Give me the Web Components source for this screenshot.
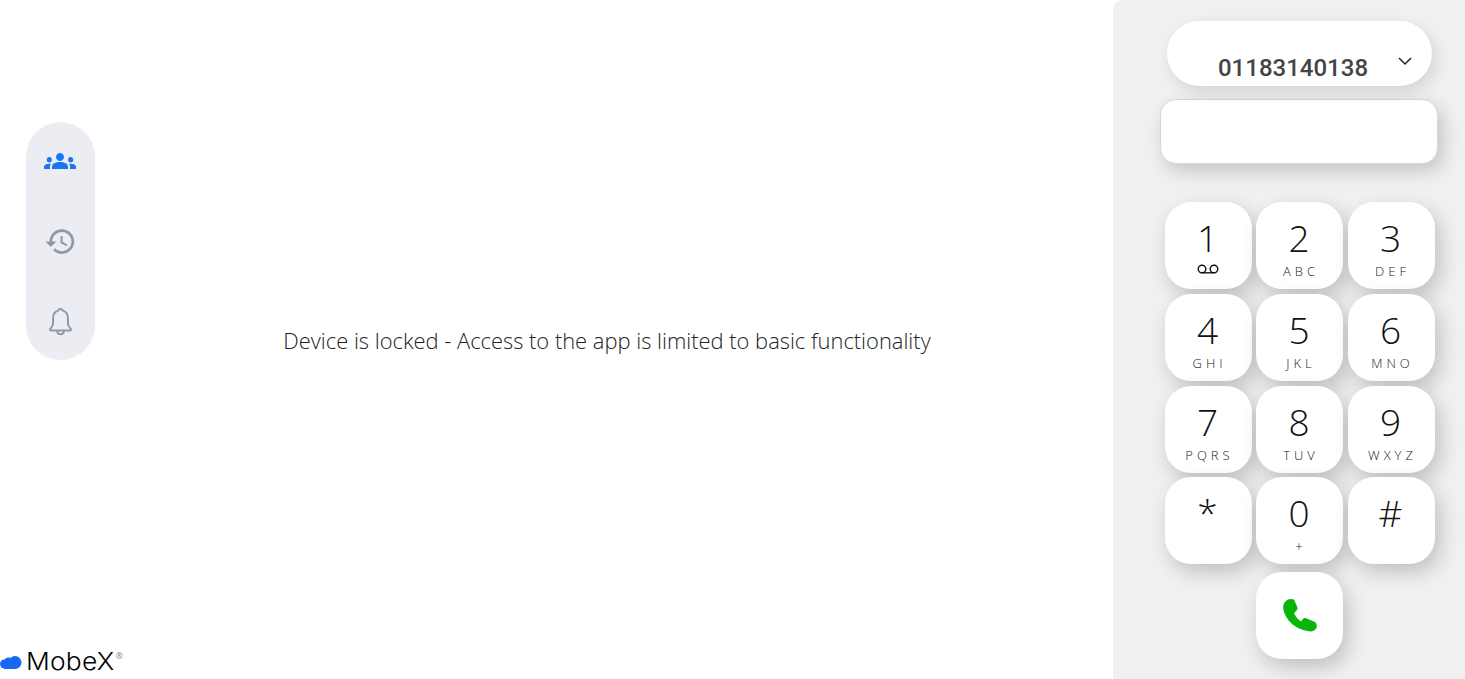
<!DOCTYPE html>
<html>
<head>
<meta charset="utf-8">
<title>MobeX</title>
<style>
html, body { margin: 0; height: 100%; background: #fff; overflow: hidden; }
body { font-family: "Open Sans", sans-serif; }
</style>
</head>
<body>
<app-shell>
  <nav-rail slot="rail"></nav-rail>
  <locked-message slot="message">Device is locked - Access to the app is limited to basic functionality</locked-message>
  <brand-logo slot="logo"></brand-logo>
  <dial-panel slot="panel" number="01183140138"></dial-panel>
</app-shell>

<script>
class AppShell extends HTMLElement {
  constructor() {
    super();
    this.attachShadow({mode: 'open'}).innerHTML = `
<style>
:host { display: grid; grid-template-columns: 101px 1012px 352px; grid-template-rows: 1fr auto; height: 679px; }
.rail { grid-column: 1; grid-row: 1; padding: 122px 0 0 26px; }
.message { grid-column: 2; grid-row: 1 / 3; display: flex; align-items: center; justify-content: center; padding-top: 2px; }
.logo { grid-column: 1 / 3; grid-row: 2; padding-bottom: 5px; }
.panel { grid-column: 3; grid-row: 1 / 3; }
</style>
<div class="rail"><slot name="rail"></slot></div>
<div class="message"><slot name="message"></slot></div>
<div class="logo"><slot name="logo"></slot></div>
<div class="panel"><slot name="panel"></slot></div>`;
  }
}

class NavRail extends HTMLElement {
  constructor() {
    super();
    this.attachShadow({mode: 'open'}).innerHTML = `
<style>
:host { display: flex; flex-direction: column; align-items: center; width: 69px; height: 238px; box-sizing: border-box;
  padding-top: 19px; gap: 40px; background: #ebedf2; border-radius: 35px; }
.slot { display: flex; align-items: center; justify-content: center; width: 40px; height: 40px; }
.first { margin-right: 1px; }
svg { display: block; }
</style>
<div class="slot first"><svg width="32" height="32" viewBox="0 0 24 24" fill="#1877f2"><path d="M12 12.750c1.630 0 3.070.39 4.240.9 1.080.48 1.760 1.560 1.760 2.730V18H6v-1.610c0-1.180.68-2.260 1.760-2.730 1.170-.52 2.610-.91 4.240-.91zM4 13c1.100 0 2-.9 2-2s-.9-2-2-2-2 .9-2 2 .9 2 2 2zm1.130 1.100C4.760 14.040 4.390 14 4 14c-.99 0-1.930.21-2.780.58C.48 14.900 0 15.620 0 16.430V18h4.500v-1.610c0-.83.23-1.610.63-2.290zM20 13c1.100 0 2-.9 2-2s-.9-2-2-2-2 .9-2 2 .9 2 2 2zm4 3.430c0-.81-.48-1.530-1.220-1.850-.85-.37-1.790-.58-2.780-.58-.39 0-.76.04-1.130.1.4.68.63 1.460.63 2.290V18H24v-1.570zM12 6c1.660 0 3 1.340 3 3s-1.340 3-3 3-3-1.340-3-3 1.340-3 3-3z"/></svg></div>
<div class="slot"><svg width="33" height="33" viewBox="0 0 24 24" fill="#8f98a8"><path d="M13 3c-4.970 0-9 4.030-9 9H1l3.890 3.890.07.14L9 12H6c0-3.870 3.130-7 7-7s7 3.130 7 7-3.130 7-7 7c-1.930 0-3.680-.79-4.940-2.060l-1.420 1.420C8.270 19.990 10.510 21 13 21c4.970 0 9-4.030 9-9s-4.030-9-9-9zm-1 5v5l4.280 2.540.72-1.210-3.500-2.080V8H12z"/></svg></div>
<div class="slot"><svg width="35" height="35" viewBox="0 0 24 24" fill="none" stroke="#8f98a8" stroke-width="1.350" stroke-linejoin="round"><path d="M12 3.200c-.7 0-1.200.5-1.300 1.200C8.200 5 6.900 7.200 6.900 10v3.200c0 1.600-.9 2.800-1.900 3.900-.4.5-.1 1.100.5 1.100h13c.6 0 .9-.6.5-1.100-1-1.100-1.900-2.300-1.900-3.900V10c0-2.800-1.300-5-3.800-5.600-.1-.7-.6-1.200-1.300-1.200z"/><path d="M9.600 18.400c.2 1.400 1.100 2.300 2.400 2.300s2.200-.9 2.400-2.300"/></svg></div>`;
  }
}

class LockedMessage extends HTMLElement {
  constructor() {
    super();
    this.attachShadow({mode: 'open'}).innerHTML = `
<style>
:host { display: block; font: 300 21.9px/27px "Open Sans", sans-serif; color: #222; white-space: nowrap; }
</style>
<slot></slot>`;
  }
}

class BrandLogo extends HTMLElement {
  constructor() {
    super();
    this.attachShadow({mode: 'open'}).innerHTML = `
<style>
:host { display: flex; align-items: center; height: 24px; white-space: nowrap; }
svg { display: block; width: 22px; height: 14px; margin-right: 4px; }
.name { display: inline-block; font: 300 24px/24px Inter, sans-serif; color: #000; letter-spacing: .2px;
  transform: scaleX(1.1); transform-origin: left center; margin-right: 8px; }
sup { align-self: flex-start; margin: 1px 0 0 1px; font: 400 9px/10px "Open Sans", sans-serif; color: #888; }
</style>
<svg viewBox="0 0 22 14" fill="#1668f0"><circle cx="15" cy="7.500" r="6.500"/><circle cx="8.500" cy="7" r="4.500"/><circle cx="4.500" cy="9" r="4.500"/><rect x="4" y="9" width="11" height="5"/></svg>
<span class="name">MobeX</span><sup>®</sup>`;
  }
}

class DialKey extends HTMLElement {
  constructor() {
    super();
    let digit = this.getAttribute('digit');
    let letters = this.getAttribute('letters') || '';
    this.attachShadow({mode: 'open'}).innerHTML = `
<style>
:host { display: flex; flex-direction: column; align-items: center; width: 87px; height: 87px; background: #fff;
  border-radius: 26px; box-shadow: 5px 8px 20px rgba(0,0,0,.2); color: #111; }
.digit { font: 300 37px/49px "Open Sans", sans-serif; margin: 11px 1px 0 0; height: 49px; }
.letters { font: 300 13px/17px "Open Sans", sans-serif; letter-spacing: 4px; margin: 1px 0 0 3px; color: #222; }
</style>
<div class="digit">${digit}</div>
<div class="letters">${letters}</div>
<slot></slot>`;
  }
}

class VoicemailGlyph extends HTMLElement {
  constructor() {
    super();
    this.attachShadow({mode: 'open'}).innerHTML = `
<style>
:host { display: block; margin: 0 1px 0 0; }
svg { display: block; width: 24px; height: 12px; }
</style>
<svg viewBox="0 0 24 12" fill="none" stroke="#111" stroke-width="1.400"><circle cx="6" cy="6" r="3.800"/><circle cx="18" cy="6" r="3.800"/><path d="M6 9.800h12"/></svg>`;
  }
}

class CallKey extends HTMLElement {
  constructor() {
    super();
    this.attachShadow({mode: 'open'}).innerHTML = `
<style>
:host { display: flex; align-items: center; justify-content: center; width: 87px; height: 87px; background: #fff;
  border-radius: 26px; box-shadow: 5px 8px 20px rgba(0,0,0,.2); }
svg { display: block; width: 40px; height: 40px; }
</style>
<svg viewBox="0 0 40 40" fill="#0ab50a"><path d="M7 5Q10 3.500 14 4.500L17.500 12.500Q18 15 14 18Q16 23 21 26.500Q23 23 25 22.800L35 27Q37.500 29 36.500 33Q34 36.500 30 36.500Q17 35 9 26Q2.500 17 3.200 11Q4 7 7 5z"/></svg>`;
  }
}

class DialPanel extends HTMLElement {
  constructor() {
    super();
    let number = this.getAttribute('number');
    this.attachShadow({mode: 'open'}).innerHTML = `
<style>
:host { display: flex; flex-direction: column; align-items: center; box-sizing: border-box; height: 679px;
  background: #f0f0f0; border-top-left-radius: 9px; padding: 21px 0 0 21px; }
.line { box-sizing: border-box; display: flex; align-items: flex-end; justify-content: center; position: relative;
  width: 265px; height: 65px; background: #fff; border-radius: 33px; box-shadow: 4px 6px 16px rgba(0,0,0,.12); padding: 0 13px 2px 0;
  font: 500 24px/32px Roboto, sans-serif; color: #444; }
.line svg { position: absolute; left: 231px; top: 35px; width: 14px; height: 10px; }
.entry { box-sizing: border-box; width: 278px; height: 65px; margin: 13px 2px 0 0; background: #fff; border-radius: 16px;
  border: 1px solid #d8d8d8; box-shadow: 5px 7px 18px rgba(0,0,0,.18); }
.keys { display: grid; grid-template-columns: repeat(3, 87px); grid-auto-rows: 87px; column-gap: 4.5px; row-gap: 4.8px; margin-top: 38px; }
.call { grid-column: 2; margin-top: 2.8px; }
</style>
<div class="line">${number}<svg viewBox="0 0 14 10" fill="none" stroke="#222" stroke-width="1.500"><path d="M1 2l6 6 6-6"/></svg></div>
<div class="entry"></div>
<div class="keys">
  <dial-key digit="1"><voicemail-glyph></voicemail-glyph></dial-key>
  <dial-key digit="2" letters="ABC"></dial-key>
  <dial-key digit="3" letters="DEF"></dial-key>
  <dial-key digit="4" letters="GHI"></dial-key>
  <dial-key digit="5" letters="JKL"></dial-key>
  <dial-key digit="6" letters="MNO"></dial-key>
  <dial-key digit="7" letters="PQRS"></dial-key>
  <dial-key digit="8" letters="TUV"></dial-key>
  <dial-key digit="9" letters="WXYZ"></dial-key>
  <dial-key digit="*"></dial-key>
  <dial-key digit="0" letters="+"></dial-key>
  <dial-key digit="#"></dial-key>
  <call-key class="call"></call-key>
</div>`;
  }
}

customElements.define('app-shell', AppShell);
customElements.define('nav-rail', NavRail);
customElements.define('locked-message', LockedMessage);
customElements.define('brand-logo', BrandLogo);
customElements.define('dial-key', DialKey);
customElements.define('voicemail-glyph', VoicemailGlyph);
customElements.define('call-key', CallKey);
customElements.define('dial-panel', DialPanel);
</script>
</body>
</html>
